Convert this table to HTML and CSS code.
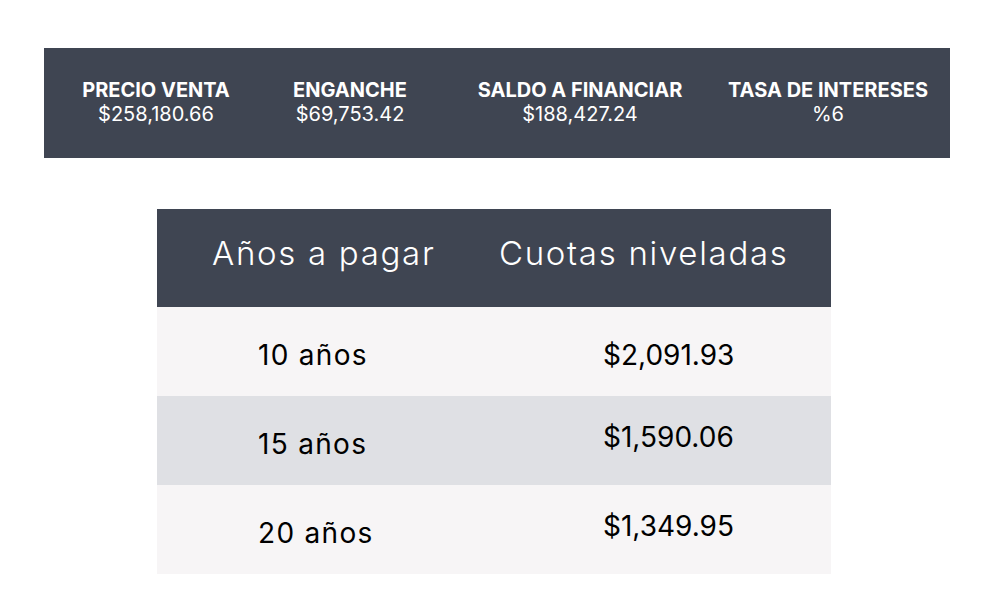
FILE: index.html
```html
<!DOCTYPE html>
<html lang="es">
<head>
    <meta charset="UTF-8">
    <meta name="viewport" content="width=device-width, initial-scale=1.0">
    <title>Cotizador</title>
    <link rel="stylesheet" href="styles.css">
</head>
<body>
    <!-- Resumen -->
    <div class="summary">
        <div class="summary-item">
            <div class="label">PRECIO VENTA</div>
            <div class="value">$258,180.66</div>
        </div>
        <div class="summary-item">
            <div class="label">ENGANCHE</div>
            <div class="value">$69,753.42</div>
        </div>
        <div class="summary-item">
            <div class="label">SALDO A FINANCIAR</div>
            <div class="value">$188,427.24</div>
        </div>
        <div class="summary-item">
            <div class="label">TASA DE INTERESES</div>
            <div class="value">%6</div>
        </div>
    </div>

    <!-- Tabla de cuotas -->
    <div class="quotes">
        <div class="quotes-head">
            <div class="head-years">Años a pagar</div>
            <div class="head-amount">Cuotas niveladas</div>
        </div>
        <div class="quotes-row">
            <div class="cell-years">10 años</div>
            <div class="cell-amount">$2,091.93</div>
        </div>
        <div class="quotes-row alt">
            <div class="cell-years">15 años</div>
            <div class="cell-amount raised">$1,590.06</div>
        </div>
        <div class="quotes-row">
            <div class="cell-years">20 años</div>
            <div class="cell-amount raised">$1,349.95</div>
        </div>
    </div>
</body>
</html>
```

FILE: styles.css
```css
/* Global */
body {
    margin: 0;
    padding: 48px 0 0 44px;
    background: #ffffff;
    font-family: 'Inter', 'Open Sans', sans-serif;
    color: #000000;
}

/* Summary bar */
.summary {
    width: 906px;
    height: 110px;
    box-sizing: border-box;
    padding: 0 22px 2px 0;
    background: #3f4552;
    color: #ffffff;
    display: grid;
    grid-template-columns: 224px 164px 296px 200px;
    align-items: center;
}

.summary-item {
    text-align: center;
}

.summary-item .label {
    font-size: 20px;
    font-weight: 700;
    line-height: 24px;
}

.summary-item .value {
    font-size: 20px;
    font-weight: 400;
    line-height: 24px;
}

/* Quotes table */
.quotes {
    width: 674px;
    margin: 51px 0 0 113px;
}

.quotes-head {
    height: 98px;
    background: #3f4552;
    color: #ffffff;
    display: grid;
    grid-template-columns: 342px 1fr;
    align-items: center;
    font-size: 33px;
    font-weight: 300;
    letter-spacing: 1.7px;
    padding-bottom: 10px;
    box-sizing: border-box;
}

.head-years {
    padding-left: 55px;
}

.quotes-row {
    height: 89px;
    background: #f7f5f6;
    display: grid;
    grid-template-columns: 446px 1fr;
    align-items: center;
    font-size: 28px;
    padding-top: 6px;
    box-sizing: border-box;
}

.quotes-row.alt {
    background: #dfe0e4;
}

.cell-years {
    padding-left: 101px;
    letter-spacing: 1.3px;
}

.cell-amount.raised {
    padding-bottom: 14px;
}
```
